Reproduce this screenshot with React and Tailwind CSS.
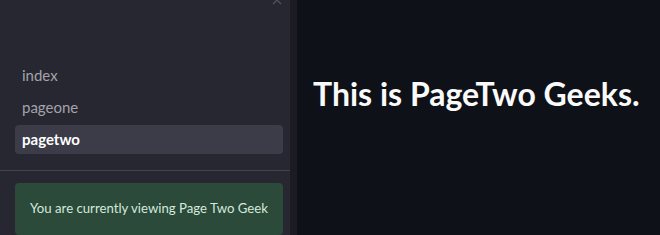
export default function App() {
  const pages = ['index', 'pageone', 'pagetwo']
  const active = 'pagetwo'
  return (
    <div className="flex h-[235px] w-[660px] overflow-hidden bg-[#0e1117]" style={{ fontFamily: 'Lato, "Noto Sans", sans-serif' }}>
      <aside className="flex w-[297px] shrink-0">
        <div className="relative flex w-[290px] flex-col bg-[#262730]">
          <svg className="absolute right-[8px] top-[-5px] h-[10px] w-[10px] text-[#50515b]" viewBox="0 0 10 10" fill="none" stroke="currentColor" strokeWidth="1.3">
            <path d="M1 1l8 8M9 1l-8 8" />
          </svg>
          <nav className="flex flex-col gap-[3px] pl-[15px] pr-[7px] pt-[61px]">
            {pages.map((p) => (
              <div
                key={p}
                className={`flex h-[29px] items-center rounded-[4px] px-[7px] text-[15px] ${
                  p === active ? 'bg-[#3b3c47] font-bold text-white' : 'text-[#a3a3ab]'
                }`}
              >
                {p}
              </div>
            ))}
          </nav>
          <div className="mt-[16px] h-px bg-[#42434d]" />
          <div className="ml-[15px] mr-[7px] mt-[12px] flex h-[62px] items-center justify-center whitespace-nowrap rounded-[4px] bg-[#2b4a3a] text-[13.2px] text-[#d3e9dc]">
            You are currently viewing Page Two Geek
          </div>
        </div>
        <div className="w-[7px] bg-[#1a1b23]" />
      </aside>
      <main className="flex-1 pl-[16px] pt-[74px]">
        <h1 className="text-[32px] font-bold leading-tight text-[#fafafa]">This is PageTwo Geeks.</h1>
      </main>
    </div>
  )
}
